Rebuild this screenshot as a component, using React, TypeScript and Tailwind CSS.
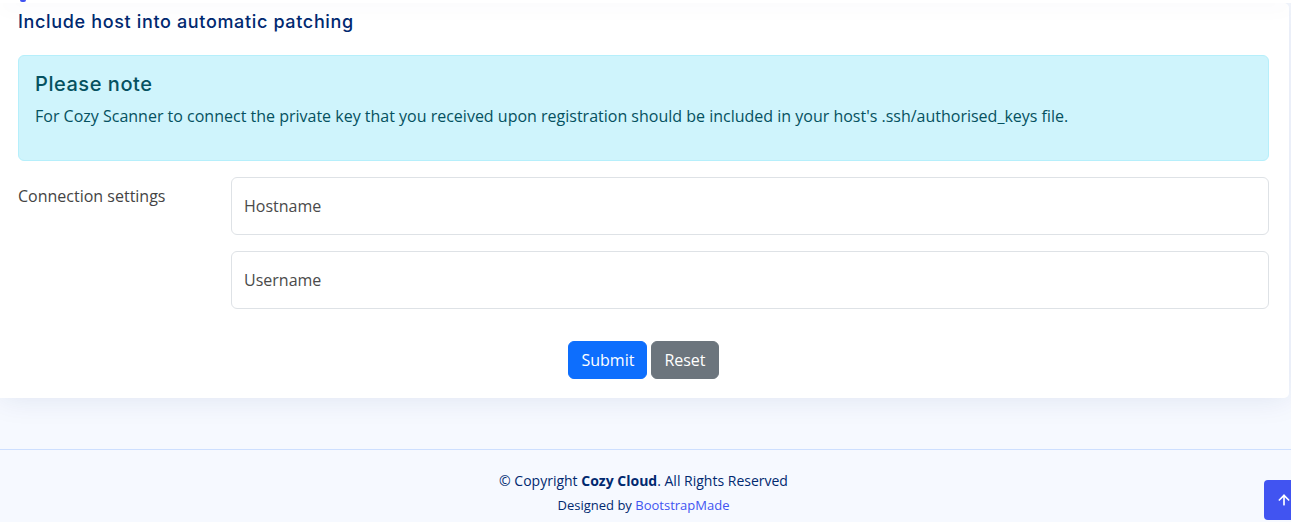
import { ArrowUp } from 'lucide-react';

export default function App() {
  return (
    <div className="relative min-h-[522px] overflow-hidden bg-[#f6f9ff] font-['Open_Sans',sans-serif] text-[#444444]">
      <div className="relative z-10 h-[3px] bg-white shadow-[0_2px_20px_rgba(1,41,112,0.1)]">
        <div className="ml-[20px] h-[2px] w-[6px] rounded-b-full bg-[#4154f1]" />
      </div>

      <main className="pr-[2px]">
        <div className="mb-[51px] rounded-br-[5px] rounded-tr-[5px] bg-white pb-[19px] pl-[18px] pr-5 pt-[5px] shadow-[0_0_30px_rgba(1,41,112,0.1)]">
          <h5 className="mb-[20px] font-['Inter',sans-serif] text-[18px] font-medium leading-[27px] tracking-[0.65px] text-[#012970]">
            Include host into automatic patching
          </h5>

          <div className="mb-4 rounded-[6px] border border-[#b6effb] bg-[#cff4fc] p-4 text-[#055160]">
            <h4 className="mb-2 font-['Inter',sans-serif] text-[20px] font-medium leading-[24px] tracking-[0.55px]">Please note</h4>
            <p className="mb-4 text-[16px] leading-[24px]">
              For Cozy Scanner to connect the private key that you received upon registration should be included in your host's .ssh/authorised_keys file.
            </p>
          </div>

          <form className="flex flex-col">
            <div className="flex">
              <label className="w-[213px] shrink-0 pt-[7px] text-[16px] leading-[24px]">Connection settings</label>
              <div className="flex flex-1 flex-col gap-4">
                <div className="flex h-[58px] items-center rounded-[6px] border border-[#dee2e6] bg-white px-3 text-[16px] text-[#4a4a4a]">
                  Hostname
                </div>
                <div className="flex h-[58px] items-center rounded-[6px] border border-[#dee2e6] bg-white px-3 text-[16px] text-[#4a4a4a]">
                  Username
                </div>
              </div>
            </div>

            <div className="mt-8 flex justify-center gap-1">
              <button type="button" className="h-[38px] rounded-[6px] border border-[#0d6efd] bg-[#0d6efd] px-3 text-[16px] leading-[24px] text-white">
                Submit
              </button>
              <button type="button" className="h-[38px] rounded-[6px] border border-[#6c757d] bg-[#6c757d] px-3 text-[16px] leading-[24px] text-white">
                Reset
              </button>
            </div>
          </form>
        </div>
      </main>

      <footer className="border-t border-[#cddfff] py-5 pr-[4px] text-center text-[#012970]">
        <div className="text-[14px] leading-[21px]">
          © Copyright <strong className="font-bold">Cozy Cloud</strong>. All Rights Reserved
        </div>
        <div className="pt-[5px] text-[13px] leading-[19.5px]">
          Designed by <a className="text-[#4154f1]">BootstrapMade</a>
        </div>
      </footer>

      <a className="absolute left-[1264px] top-[480px] flex h-10 w-10 items-center justify-center rounded-[4px] bg-[#4154f1] text-white">
        <ArrowUp size={16} strokeWidth={2.5} />
      </a>
    </div>
  );
}
